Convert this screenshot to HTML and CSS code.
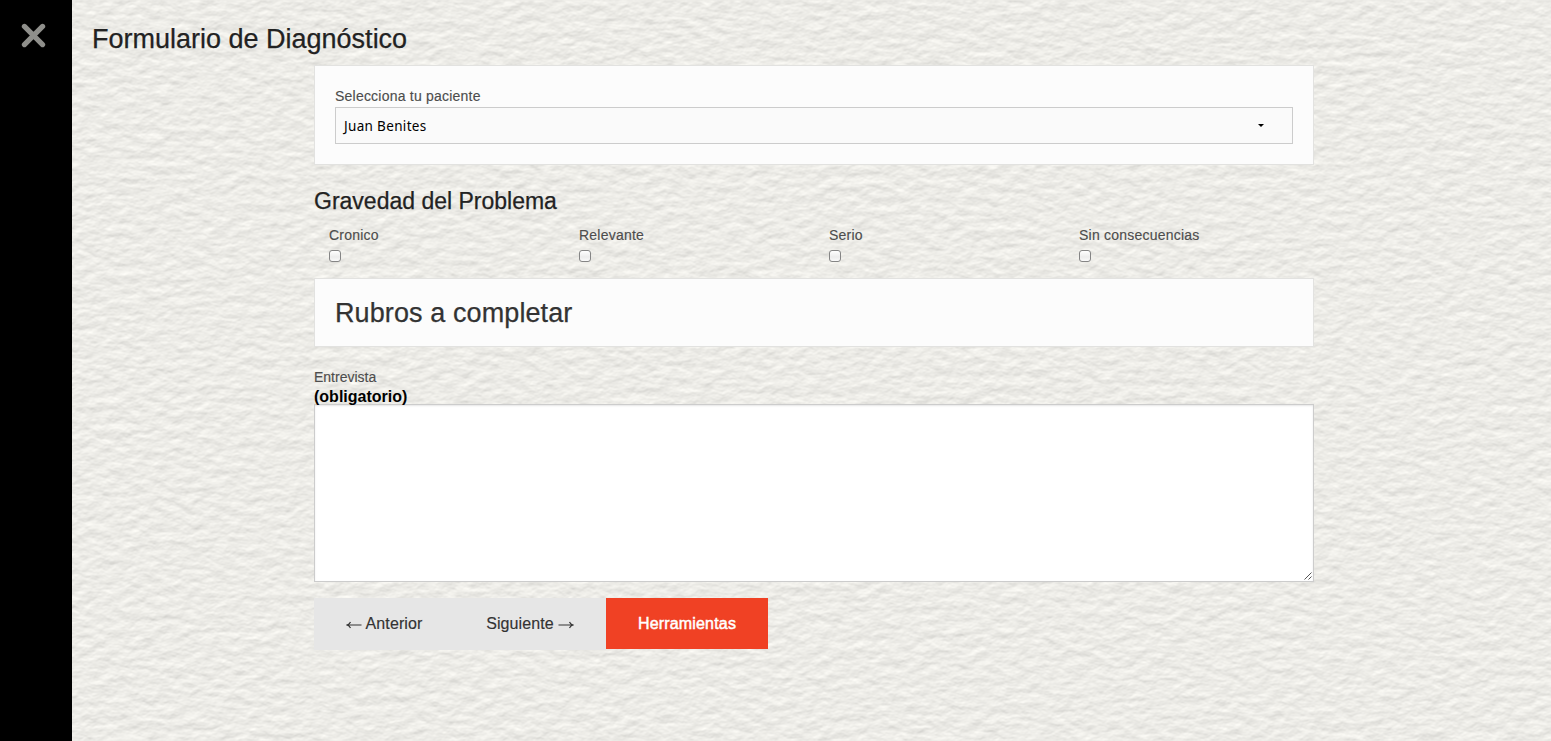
FILE: index.html
```html
<!DOCTYPE html>
<html lang="es">
<head>
<meta charset="utf-8">
<title>Formulario de Diagnóstico</title>
<link rel="stylesheet" href="styles.css">
</head>
<body>
<svg class="texture" aria-hidden="true">
  <filter id="leather" x="0" y="0" width="100%" height="100%" color-interpolation-filters="sRGB">
    <feTurbulence type="fractalNoise" baseFrequency="0.07 0.11" numOctaves="4" seed="8" result="grain"/>
    <feDiffuseLighting in="grain" surfaceScale="0.46" diffuseConstant="1.07" lighting-color="#fffef9">
      <feDistantLight azimuth="260" elevation="60"/>
    </feDiffuseLighting>
  </filter>
  <rect width="100%" height="100%" filter="url(#leather)"/>
</svg>
<div class="layout">
  <nav class="sidebar">
    <svg class="close" viewBox="0 0 24 24"><path d="M3.3 3.3L20.7 20.7M20.7 3.3L3.3 20.7" fill="none" stroke="#8f8f8b" stroke-width="5" stroke-linecap="round"/></svg>
  </nav>
  <main class="main">
    <h1 class="title"><span>Formulario de Diagnóstico</span></h1>
    <form class="form">
      <section class="panel patient">
        <label class="label t-patient">Selecciona tu paciente</label>
        <div class="select"><span class="t-name">Juan Benites</span><svg class="caret" viewBox="0 0 6 3"><path d="M0 0H6L3 3Z"/></svg></div>
      </section>
      <h2 class="subtitle"><span>Gravedad del Problema</span></h2>
      <div class="severity">
        <label class="option">Cronico<input class="check" type="checkbox"></label>
        <label class="option">Relevante<input class="check" type="checkbox"></label>
        <label class="option">Serio<input class="check" type="checkbox"></label>
        <label class="option">Sin consecuencias<input class="check" type="checkbox"></label>
      </div>
      <section class="panel topics"><h2 class="topics-title"><span>Rubros a completar</span></h2></section>
      <label class="label interview">Entrevista</label>
      <strong class="required">(obligatorio)</strong>
      <div class="area-wrap">
        <textarea class="area"></textarea>
        <svg class="grip" viewBox="0 0 8 8"><path d="M0.5 7.5L7.5 0.5M4.5 7.5L7.5 4.5" stroke="#555" fill="none"/></svg>
      </div>
      <div class="actions">
        <div class="pager">
          <button type="button" class="btn prev"><svg class="arrow" viewBox="0 0 16 8"><path d="M15.5 4H1M4.5 1Q3.5 3.3 1 4Q3.5 4.7 4.5 7" /></svg><span>Anterior</span></button>
          <button type="button" class="btn next"><span>Siguiente</span><svg class="arrow" viewBox="0 0 16 8"><path d="M.5 4H15M11.5 1Q12.5 3.3 15 4Q12.5 4.7 11.5 7" /></svg></button>
        </div>
        <button type="button" class="btn tools"><span>Herramientas</span></button>
      </div>
    </form>
  </main>
</div>
</body>
</html>
```
FILE: styles.css
```css
* { box-sizing: border-box; }
body {
  margin: 0;
  height: 741px;
  overflow: hidden;
  background: #e9e9e3;
  font-family: "Liberation Sans", Arial, sans-serif;
  color: #222;
}
h1, h2 { margin: 0; font-weight: normal; -webkit-text-stroke: .25px currentColor; }
.texture { position: absolute; inset: 0; width: 100%; height: 100%; }
.layout { position: relative; display: flex; height: 741px; }
.sidebar { width: 72px; flex: none; background: #000; padding: 23px 0 0 21px; }
.close { display: block; width: 25px; height: 25px; }
.main { flex: 1; padding: 20px 20px 0; }
.title { font-size: 27px; line-height: 38px; height: 45px; white-space: nowrap; }
.form { width: 1000px; margin-left: 222px; }
.panel { background: #fcfcfc; border: 1px solid #e2e2e0; }
.patient { height: 100px; padding: 20px; }
.label, .option {
  font-size: 14px;
  line-height: 21px;
  color: #4d4d4d;
  display: block;
  -webkit-text-stroke: .15px currentColor;
}
.t-patient, .option { letter-spacing: .22px; }
.select {
  height: 37px;
  border: 1px solid #ccc;
  background: #fafafa;
  display: flex;
  align-items: center;
  justify-content: space-between;
  padding: 0 28px 0 8px;
  font: 13.5px "Noto Sans", sans-serif;
  letter-spacing: .33px;
  color: #000;
}
.caret { width: 6px; height: 3px; }
.subtitle { margin-top: 20px; font-size: 23px; line-height: 32px; }
.severity { display: grid; grid-template-columns: repeat(4, 250px); height: 61px; padding: 8px 0 0 15px; }
.check {
  appearance: none;
  display: block;
  width: 12px;
  height: 12px;
  margin: 4px 0 0;
  border: 1px solid #858585;
  border-radius: 3px;
  background: linear-gradient(#fff, #ececec 60%, #fafafa);
}
.topics { height: 69px; padding: 15px 20px; }
.topics-title { font-size: 27px; line-height: 38px; letter-spacing: .1px; color: #333; }
.interview { margin-top: 20px; }
.required {
  position: relative;
  z-index: 1;
  display: block;
  font-size: 16px;
  line-height: 18px;
  height: 16px;
  color: #000;
}
.area-wrap { position: relative; height: 178px; }
.area {
  display: block;
  width: 1000px;
  height: 178px;
  border: 1px solid #ccc;
  background: #fff;
  box-shadow: inset 0 1px 2px rgba(0, 0, 0, .1);
  resize: none;
}
.grip { position: absolute; right: 2px; bottom: 2px; width: 8px; height: 8px; }
.actions { display: flex; align-items: flex-start; margin-top: 16px; }
.pager { display: flex; height: 52px; background: #e6e6e6; }
.btn {
  border: 0;
  background: none;
  font: 16px "Liberation Sans", Arial, sans-serif;
  letter-spacing: .1px;
  color: #333;
  display: flex;
  align-items: center;
  justify-content: center;
  height: 51px;
  padding: 0;
  -webkit-text-stroke: .15px currentColor;
}
.prev { width: 140px; gap: 4px; }
.next { width: 152px; gap: 4px; }
.tools { width: 162px; background: #f04124; color: #fff; letter-spacing: .18px; -webkit-text-stroke: .5px #fff; }
.arrow { width: 16px; height: 8px; fill: none; stroke: #333; stroke-width: 1.2; margin-top: 2px; }
```
